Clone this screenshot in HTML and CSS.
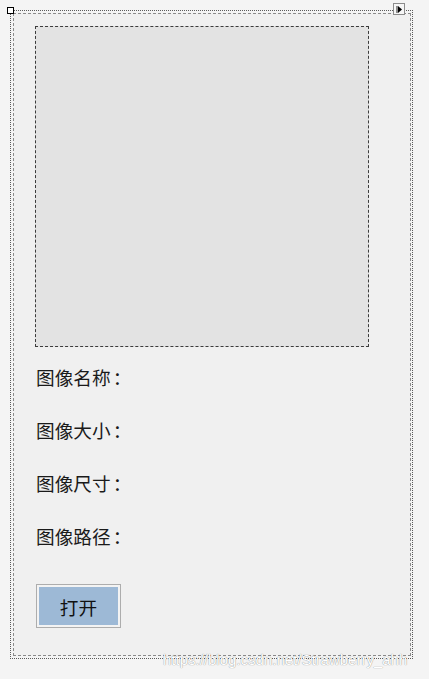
FILE: index.html
```html
<!DOCTYPE html>
<html lang="zh-CN">
<head>
<meta charset="utf-8">
<title>图像信息</title>
<link rel="stylesheet" href="styles.css">
</head>
<body>
<div class="page">
  <span class="handle-sq"></span>
  <span class="handle-arrow"><svg width="9" height="9" viewBox="0 0 9 9"><rect x="1.5" y="1" width="1" height="7" fill="#222"/><polygon points="3,1 7,4.5 3,8" fill="#000"/></svg></span>
  <div class="frame">
    <div class="panel">
      <div class="picture"></div>
      <div class="info">
        <div class="label">图像名称<span class="colon">：</span></div>
        <div class="label">图像大小<span class="colon">：</span></div>
        <div class="label">图像尺寸<span class="colon">：</span></div>
        <div class="label">图像路径<span class="colon">：</span></div>
      </div>
      <button class="btn">打开</button>
    </div>
  </div>
  <div class="watermark">https://blog.csdn.net/Strawberry_ahh</div>
</div>
</body>
</html>
```

FILE: styles.css
```css
html, body {
  margin: 0;
  padding: 0;
  background: #f4f4f4;
}
.page {
  position: relative;
  width: 429px;
  height: 679px;
  padding: 10px 0 0 10px;
  box-sizing: border-box;
  font-family: "Noto Sans CJK SC", "Noto Sans", sans-serif;
}
.frame {
  width: 403px;
  height: 649px;
  box-sizing: border-box;
  border: 1px dotted #5a5a5a;
  padding: 2px 1px 2px 2px;
}
.panel {
  height: 100%;
  box-sizing: border-box;
  border: 1px dashed #8a8a8a;
  background: #f0f0f0;
  padding: 12px 0 0 21px;
  display: flex;
  flex-direction: column;
  align-items: flex-start;
}
.picture {
  width: 334px;
  height: 321px;
  box-sizing: border-box;
  border: 1px dashed #3c3c3c;
  background: #e3e3e3;
}
.info {
  margin-top: 18px;
  display: flex;
  flex-direction: column;
  gap: 29px;
}
.label {
  font-size: 18.67px;
  line-height: 24px;
  height: 24px;
  color: #1a1a1a;
  margin-left: 1px;
}
.colon {
  margin-left: 2px;
}
.btn {
  margin-top: 36px;
  margin-left: 1px;
  width: 85px;
  height: 44px;
  box-sizing: border-box;
  border: 1px solid #adadad;
  box-shadow: inset 0 0 0 2px #f3f3f3;
  background: #9db9d6;
  font-family: "Noto Sans CJK SC", "Noto Sans", sans-serif;
  font-size: 18.67px;
  color: #111;
  padding: 0;
}
.handle-sq {
  position: absolute;
  left: 7px;
  top: 7px;
  width: 7px;
  height: 7px;
  border: 1px solid #000;
  background: #fff;
  box-sizing: border-box;
}
.handle-arrow {
  position: absolute;
  left: 393px;
  top: 3px;
  width: 12px;
  height: 12px;
  box-sizing: border-box;
  border: 1px solid #8c8c8c;
  background: #f6f6f6;
  display: flex;
  align-items: center;
  justify-content: center;
}
.handle-arrow svg {
  display: block;
}
.watermark {
  position: absolute;
  left: 163px;
  top: 650px;
  font-family: "Liberation Sans", Arial, sans-serif;
  font-size: 15px;
  line-height: 20px;
  color: #ffffff;
  text-shadow: 0 0 1px rgba(0, 0, 0, 0.4), 0 0 1px rgba(0, 0, 0, 0.2);
  white-space: nowrap;
}
```
